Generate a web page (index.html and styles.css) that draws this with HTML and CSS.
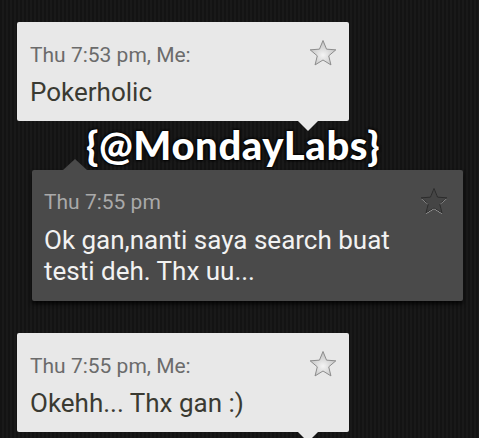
FILE: index.html
```html
<!DOCTYPE html>
<html>
<head>
<meta charset="utf-8">
<link rel="stylesheet" href="styles.css">
</head>
<body>
<div class="chat">
  <div class="bubble light arrow-down">
    <div class="head">
      <span class="time">Thu 7:53 pm, Me:</span>
      <svg class="star" viewBox="0 0 28 26" width="28" height="26"><defs><radialGradient id="g1" cx="0.5" cy="0.6" r="0.6"><stop offset="0" stop-color="#f4f4f4"/><stop offset="1" stop-color="#bdbdbd"/></radialGradient></defs><path d="M14 0.5 L17.53 9.15 L26.84 9.83 L19.71 15.85 L21.94 24.92 L14 20 L6.06 24.92 L8.29 15.85 L1.16 9.83 L10.47 9.15 Z" fill="url(#g1)" stroke="#8c8c8c" stroke-width="1"/></svg>
    </div>
    <div class="msg">Pokerholic</div>
  </div>

  <div class="bubble dark arrow-up">
    <div class="head">
      <span class="time">Thu 7:55 pm</span>
      <svg class="star" viewBox="0 0 28 26" width="28" height="28"><path d="M14 1.5 L17.53 10.15 L26.84 10.83 L19.71 16.85 L21.94 25.92 L14 21 L6.06 25.92 L8.29 16.85 L1.16 10.83 L10.47 10.15 Z" fill="#cfcfcf"/><path d="M14 0.5 L17.53 9.15 L26.84 9.83 L19.71 15.85 L21.94 24.92 L14 20 L6.06 24.92 L8.29 15.85 L1.16 9.83 L10.47 9.15 Z" fill="#454545" stroke="#2c2c2c" stroke-width="1"/></svg>
    </div>
    <div class="msg">Ok gan,nanti saya search buat testi deh. Thx uu...</div>
  </div>

  <div class="bubble light arrow-down last">
    <div class="head">
      <span class="time">Thu 7:55 pm, Me:</span>
      <svg class="star" viewBox="0 0 28 26" width="28" height="26"><defs><radialGradient id="g2" cx="0.5" cy="0.6" r="0.6"><stop offset="0" stop-color="#f4f4f4"/><stop offset="1" stop-color="#bdbdbd"/></radialGradient></defs><path d="M14 0.5 L17.53 9.15 L26.84 9.83 L19.71 15.85 L21.94 24.92 L14 20 L6.06 24.92 L8.29 15.85 L1.16 9.83 L10.47 9.15 Z" fill="url(#g2)" stroke="#8c8c8c" stroke-width="1"/></svg>
    </div>
    <div class="msg">Okehh... Thx gan :)</div>
  </div>
</div>
<div class="watermark">{@MondayLabs}</div>
</body>
</html>
```

FILE: styles.css
```css
html, body {
  margin: 0;
  padding: 0;
}
body {
  width: 479px;
  height: 438px;
  overflow: hidden;
  position: relative;
  font-family: Roboto, "Liberation Sans", sans-serif;
  background-color: #151515;
  background-image: repeating-linear-gradient(to right, #131313 0px, #131313 2px, #191919 2px, #191919 4px);
}
.chat {
  display: flex;
  flex-direction: column;
  align-items: flex-start;
  padding-top: 22px;
}
.bubble {
  position: relative;
  box-sizing: border-box;
  border-radius: 2px;
}
.light {
  margin-left: 17px;
  width: 332px;
  height: 99px;
  background: #e8e8e8;
  padding: 21px 0 0 13px;
}
.dark {
  margin-left: 32px;
  margin-top: 49px;
  width: 431px;
  height: 131px;
  background: #4a4a4a;
  padding: 20px 0 0 12px;
  box-shadow: 0 3px 4px rgba(0,0,0,0.8);
}
.last {
  margin-top: 32px;
}
.head {
  display: flex;
  justify-content: space-between;
  align-items: flex-start;
}
.time {
  font-size: 21px;
  line-height: 24px;
}
.light .time { color: #6b6b6b; }
.dark .time { color: #a9a9a9; }
.star {
  display: block;
  margin-top: -3px;
}
.light .star { margin-right: 12px; }
.dark .star { margin-right: 15px; margin-top: -3px; }
.msg {
  margin-top: 10px;
}
.light .msg {
  font-size: 26px;
  line-height: 30px;
  color: #3a3a32;
}
.dark .msg {
  font-size: 26px;
  line-height: 31px;
  color: #f2f2f2;
  width: 380px;
}
.arrow-down::after {
  content: "";
  position: absolute;
  left: 281px;
  bottom: -10px;
  border-left: 10px solid transparent;
  border-right: 10px solid transparent;
  border-top: 10px solid #e8e8e8;
}
.arrow-up::before {
  content: "";
  position: absolute;
  left: 31px;
  top: -11px;
  border-left: 12px solid transparent;
  border-right: 12px solid transparent;
  border-bottom: 11px solid #4a4a4a;
}
.watermark {
  position: absolute;
  left: 86px;
  top: 123px;
  font-family: Lato, "Open Sans", sans-serif;
  font-weight: 900;
  font-size: 40px;
  line-height: 44px;
  letter-spacing: 0.6px;
  color: #ffffff;
  text-shadow: 0 0 3px #000, 0 0 3px #000, 0 0 2px #000;
}
```
